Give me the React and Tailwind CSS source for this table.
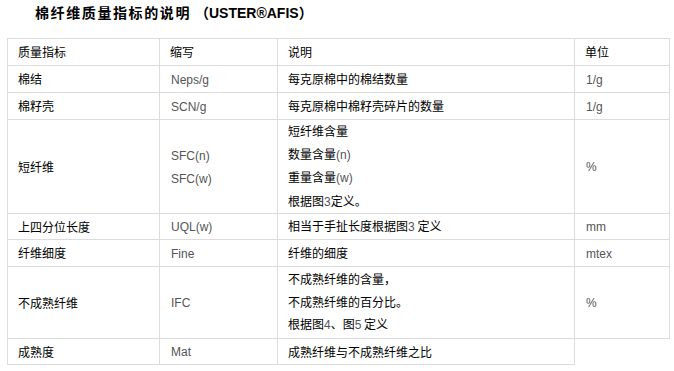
export default function App() {
  const cn = '"Noto Sans CJK SC", sans-serif';
  const lat = { fontFamily: '"Liberation Sans", Arial, sans-serif' };
  const L = ({ children }) => (
    <span className="text-[#555]" style={lat}>{children}</span>
  );
  const rows = [
    { a: "棉结", b: "Neps/g", c: ["每克原棉中的棉结数量"], d: "1/g", h: "h-[27px]" },
    { a: "棉籽壳", b: "SCN/g", c: ["每克原棉中棉籽壳碎片的数量"], d: "1/g", h: "h-[27px]" },
    {
      a: "短纤维",
      b: ["SFC(n)", "SFC(w)"],
      c: [
        "短纤维含量",
        <>数量含量<L>(n)</L></>,
        <>重量含量<L>(w)</L></>,
        <>根据图<L>3</L>定义。</>,
      ],
      d: "%",
      h: "h-[94px]",
    },
    { a: "上四分位长度", b: "UQL(w)", c: [<>相当于手扯长度根据图<L>3</L> 定义</>], d: "mm", h: "h-[26px]" },
    { a: "纤维细度", b: "Fine", c: ["纤维的细度"], d: "mtex", h: "h-[27px]" },
    {
      a: "不成熟纤维",
      b: "IFC",
      c: ["不成熟纤维的含量，", "不成熟纤维的百分比。", <>根据图<L>4</L>、图<L>5</L> 定义</>],
      d: "%",
      h: "h-[72px]",
    },
    { a: "成熟度", b: "Mat", c: ["成熟纤维与不成熟纤维之比"], d: null, h: "h-[26px]" },
  ];
  const td = "border border-[#dcdcdc] px-[10px] py-0 align-middle";
  return (
    <div className="w-[674px] h-[371px] bg-white text-black" style={{ fontFamily: cn }}>
      <div className="pl-[35px] h-[25px] leading-[25px] text-[14px] font-bold whitespace-nowrap">
        <span className="tracking-[1.6px]">棉纤维质量指标的说明</span>
        <span className="inline-block w-[4px]"></span>（<span style={lat}>USTER®AFIS</span>）
      </div>
      <table
        className="mt-[13px] ml-[7px] w-[662px] table-fixed border-collapse text-[12px] leading-[22px]"
      >
        <colgroup>
          <col className="w-[152px]" />
          <col className="w-[118px]" />
          <col className="w-[297px]" />
          <col className="w-[95px]" />
        </colgroup>
        <tbody>
          <tr className="h-[27px]">
            <td className={td}>质量指标</td>
            <td className={td}>缩写</td>
            <td className={td}>说明</td>
            <td className={td}>单位</td>
          </tr>
          {rows.map((r, i) => (
            <tr key={i} className={r.h}>
              <td className={td}>{r.a}</td>
              <td className={td + " pl-[11px]"}>
                {(Array.isArray(r.b) ? r.b : [r.b]).map((x, j) => (
                  <div key={j} className="leading-[21px]">
                    <L>{x}</L>
                  </div>
                ))}
              </td>
              <td className={td}>
                {r.c.map((x, j) => (
                  <div key={j} className={r.c.length > 1 ? "leading-[22.5px]" : ""}>
                    {x}
                  </div>
                ))}
              </td>
              {r.d !== null && (
                <td className={td + " pl-[11px]"}>
                  <L>{r.d}</L>
                </td>
              )}
            </tr>
          ))}
        </tbody>
      </table>
    </div>
  );
}
